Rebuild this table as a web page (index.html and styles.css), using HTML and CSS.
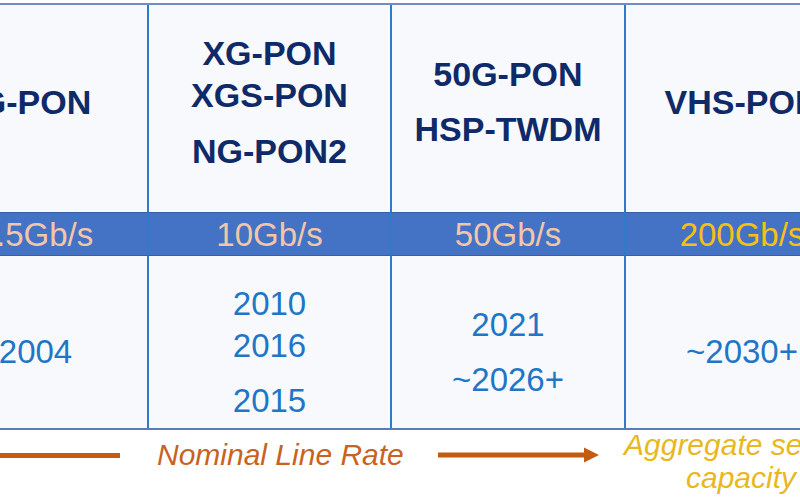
FILE: index.html
```html
<!DOCTYPE html>
<html lang="en">
<head>
<meta charset="utf-8">
<title>PON generations</title>
<link rel="stylesheet" href="styles.css">
</head>
<body>
<div class="page">
  <div class="table">
    <div class="cell head first"><div class="ln">G-PON</div></div>
    <div class="cell head"><div class="ln">XG-PON</div><div class="ln">XGS-PON</div><div class="ln gap14">NG-PON2</div></div>
    <div class="cell head"><div class="ln">50G-PON</div><div class="ln gap13">HSP-TWDM</div></div>
    <div class="cell head"><div class="ln">VHS-PON</div></div>

    <div class="cell band first">2.5Gb/s</div>
    <div class="cell band">10Gb/s</div>
    <div class="cell band">50Gb/s</div>
    <div class="cell band gold">200Gb/s</div>

    <div class="cell year first"><div class="ln">2004</div></div>
    <div class="cell year"><div class="ln">2010</div><div class="ln">2016</div><div class="ln gap13">2015</div></div>
    <div class="cell year"><div class="ln">2021</div><div class="ln gap13">~2026+</div></div>
    <div class="cell year"><div class="ln">~2030+</div></div>
  </div>

  <div class="footer">
    <div class="nominal">
      <div class="rule"></div>
      <div class="nominal-text">Nominal Line Rate</div>
      <svg class="arrow" width="161" height="16" viewBox="0 0 161 16">
        <rect x="0" y="5.5" width="148" height="5" fill="#c55a11"/>
        <polygon points="146,0.5 161,8 146,15.5" fill="#c55a11"/>
      </svg>
    </div>
    <div class="aggregate">Aggregate service<br>capacity</div>
  </div>
</div>
</body>
</html>
```

FILE: styles.css
```css
html, body {
  margin: 0;
  padding: 0;
  background: #ffffff;
}

.page {
  width: 800px;
  height: 500px;
  overflow: hidden;
  font-family: "Liberation Sans", Arial, sans-serif;
}

.table {
  display: grid;
  grid-template-columns: 223px 243px 234px 234px;
  grid-template-rows: 207px 44px 172px;
  margin-top: 3px;
  margin-left: -76px;
  width: 934px;
  border-top: 2px solid #6f8dc0;
  border-bottom: 2px solid #5b7bb5;
}

.cell {
  box-sizing: border-box;
  background: #f7f9fd;
  border-left: 2px solid #2f7bca;
  text-align: center;
}

.cell.first {
  border-left: none;
}

.head {
  display: flex;
  flex-direction: column;
  justify-content: center;
  padding-bottom: 14px;
  font-weight: bold;
  font-size: 34px;
  color: #0f2a68;
}

.ln {
  line-height: 42px;
  white-space: nowrap;
}

.gap13 { margin-top: 13px; }
.gap14 { margin-top: 14px; }

.band {
  background: #4472c4;
  border-top: 1px solid #3a5ea6;
  border-bottom: 1px solid #3a5ea6;
  padding-top: 1px;
  font-size: 33px;
  line-height: 41px;
  color: #f3c6a8;
  white-space: nowrap;
}

.band.first {
  border-left: none;
}

.band:not(.first) {
  border-left-color: #2f7bca;
}

.band.gold {
  color: #f7c012;
}

.year {
  display: flex;
  flex-direction: column;
  justify-content: center;
  padding-top: 20px;
  font-size: 33px;
  color: #1f76c6;
}

.footer {
  display: grid;
  grid-template-columns: 700px 234px;
  margin-left: -76px;
  width: 934px;
}

.nominal {
  display: flex;
  align-items: center;
  height: 50px;
  padding-left: 76px;
}

.rule {
  width: 120px;
  height: 5px;
  background: #c55a11;
}

.nominal-text {
  margin-left: 37px;
  font-size: 30px;
  line-height: 30px;
  font-style: italic;
  color: #c8631f;
  white-space: nowrap;
}

.arrow {
  display: block;
  margin-left: 34px;
}

.aggregate {
  margin-top: -2px;
  font-size: 30px;
  line-height: 33px;
  font-style: italic;
  color: #e9b820;
  text-align: center;
  white-space: nowrap;
}
```
